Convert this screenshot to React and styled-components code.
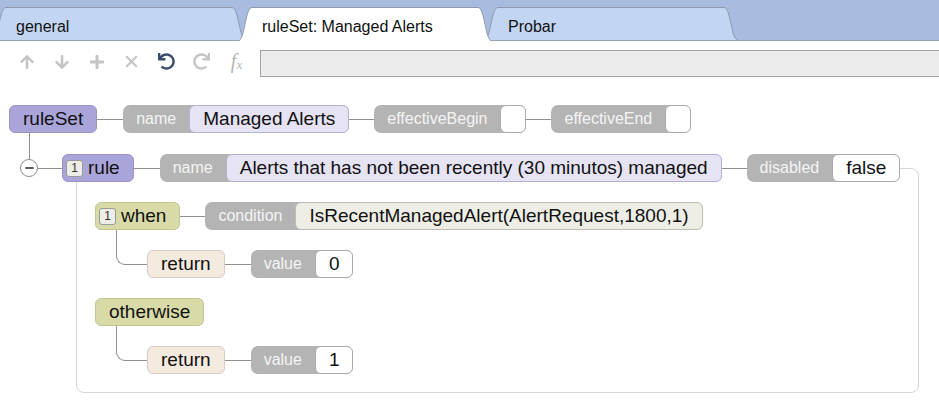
import React from 'react';
import styled, { createGlobalStyle } from 'styled-components';
import { FaArrowUp, FaArrowDown, FaPlus, FaUndo, FaRedo } from 'react-icons/fa';
import { X } from 'lucide-react';

const LINE = '#8f8f8f';

const GlobalStyle = createGlobalStyle`
    html, body {
        margin: 0;
        padding: 0;
        background: #fff;
    }
    body {
        font-family: "Liberation Sans", Arial, sans-serif;
        color: #111;
    }
`;

const Page = styled.div`
    width: 939px;
    height: 404px;
    overflow: hidden;
`;

const TabBar = styled.div`
    display: flex;
    align-items: flex-end;
    height: 41px;
    box-sizing: border-box;
    padding-top: 7px;
    background: #a8bcdf;
    border-bottom: 1px solid #98a2b4;
`;

const TabShape = styled.div`
    display: flex;
    flex: none;
    height: ${(p) => (p.$active ? 34 : 33)}px;
    margin-left: -8px;
    margin-bottom: ${(p) => (p.$active ? -1 : 0)}px;
    position: relative;
    z-index: ${(p) => (p.$active ? 2 : 1)};
    svg {
        display: block;
        flex: none;
    }
`;

const TabBody = styled.div`
    width: 226px;
    box-sizing: border-box;
    background: ${(p) => p.$bg};
    border-top: 1px solid #8e99ad;
    font-size: 16px;
    padding: 10px 0 0 10px;
    white-space: nowrap;
`;

const Toolbar = styled.div`
    display: flex;
    align-items: center;
    height: 44px;
    padding-left: 9px;
`;

const ToolButton = styled.span`
    width: 35px;
    height: 24px;
    margin-top: -3px;
    display: flex;
    justify-content: center;
    align-items: center;
    color: ${(p) => (p.$on ? '#3b4a6b' : '#c4c4c4')};
`;

const FxGlyph = styled.span`
    font-family: "Liberation Serif", "Times New Roman", serif;
    font-style: italic;
    font-size: 20px;
    color: #b5b5b5;
    sub {
        font-size: 13px;
        vertical-align: -1px;
    }
`;

const FormulaInput = styled.div`
    flex: 1;
    height: 27px;
    margin-left: 6px;
    box-sizing: border-box;
    background: #ececec;
    border: 1px solid #a3a3a3;
    border-right: none;
`;

const Tree = styled.div`
    padding: 20px 0 0 9px;
    display: flex;
    flex-direction: column;
    align-items: flex-start;
`;

const Row = styled.div`
    display: flex;
    align-items: center;
    height: 28px;
`;

const Link = styled.span`
    flex: none;
    width: ${(p) => p.$w || 25}px;
    height: 1px;
    background: ${LINE};
`;

const NODE_COLORS = {
    set: { bg: '#aaa5d9', border: '#9a94c8' },
    cond: { bg: '#d8dba8', border: '#c3c692' },
    ret: { bg: '#f5eae0', border: '#d6ccc1' },
};

const Node = styled.div`
    display: flex;
    align-items: center;
    gap: 5px;
    flex: none;
    height: 28px;
    box-sizing: border-box;
    padding: 0 13px 0 ${(p) => (p.$badge ? 3 : 13)}px;
    border: 1px solid ${(p) => NODE_COLORS[p.$kind].border};
    border-radius: 6px;
    background: ${(p) => NODE_COLORS[p.$kind].bg};
    font-size: 19px;
    white-space: nowrap;
`;

const Badge = styled.span`
    width: 17px;
    height: 17px;
    box-sizing: border-box;
    display: flex;
    align-items: center;
    justify-content: center;
    border: 1px solid #999;
    border-radius: 3px;
    background: #eeeee6;
    color: #333;
    font-size: 12px;
`;

const Field = styled.div`
    display: flex;
    align-items: stretch;
    flex: none;
    height: 28px;
    background: #b4b4b4;
    border-radius: 7px;
`;

const FieldLabel = styled.span`
    display: flex;
    align-items: center;
    padding: 0 13px;
    color: #f4f4f4;
    font-size: 16px;
    white-space: nowrap;
`;

const VALUE_COLORS = {
    lav: { bg: '#e5e3f4', border: '#b6b3d1' },
    beige: { bg: '#eeeee7', border: '#bdbdb3' },
    white: { bg: '#ffffff', border: '#ababab' },
};

const FieldValue = styled.span`
    display: flex;
    align-items: center;
    box-sizing: border-box;
    min-width: 26px;
    padding: 0 ${(p) => (p.$empty ? 0 : 13)}px;
    background: ${(p) => VALUE_COLORS[p.$tone].bg};
    border: 1px solid ${(p) => VALUE_COLORS[p.$tone].border};
    border-radius: 6px;
    font-size: 19px;
    white-space: nowrap;
`;

const Stem = styled.span`
    display: block;
    width: 1px;
    height: ${(p) => p.$h}px;
    margin-left: 20px;
    background: ${LINE};
`;

const ChildRow = styled.div`
    display: flex;
    align-items: flex-start;
`;

const ToggleColumn = styled.div`
    width: 53px;
    display: flex;
    flex-direction: column;
`;

const ToggleRow = styled.div`
    display: flex;
    align-items: center;
    padding-left: 11px;
`;

const Collapse = styled.span`
    width: 18px;
    height: 18px;
    box-sizing: border-box;
    border: 1.5px solid #8a8a8a;
    border-radius: 50%;
    background: #fff;
    display: flex;
    align-items: center;
    justify-content: center;
    flex: none;
    &::after {
        content: '';
        width: 9px;
        height: 2.5px;
        background: #5d5d5d;
        border-radius: 1px;
    }
`;

const Frame = styled.div`
    position: relative;
    z-index: 0;
    display: flex;
    flex-direction: column;
    padding-right: 19px;
    &::before {
        content: '';
        position: absolute;
        z-index: -1;
        left: 14px;
        top: 14px;
        right: 0;
        bottom: 0;
        border: 1px solid #d6d6d6;
        border-radius: 8px;
    }
`;

const FrameBody = styled.div`
    display: flex;
    flex-direction: column;
    align-items: flex-start;
    gap: 20px;
    padding: 20px 0 19px 33px;
`;

const Branch = styled.div`
    display: flex;
    flex-direction: column;
    align-items: flex-start;
`;

const Children = styled.div`
    padding: 20px 0 0 52px;
`;

const Child = styled.div`
    position: relative;
    &::before {
        content: '';
        position: absolute;
        left: -31px;
        top: -20px;
        width: 31px;
        height: 35px;
        box-sizing: border-box;
        border-left: 1px solid ${LINE};
        border-bottom: 1px solid ${LINE};
        border-bottom-left-radius: 9px;
    }
`;

const Flare = ({ h, fill, side }) => {
    const curve = side === 'left'
        ? `M0 ${h} C7 ${h} 7 0.5 14 0.5`
        : `M0 0.5 C7 0.5 7 ${h} 14 ${h}`;
    const area = side === 'left' ? `${curve} L14 ${h} Z` : `${curve} L0 ${h} Z`;
    return (
        <svg width="14" height={h} viewBox={`0 0 14 ${h}`}>
            <path d={area} fill={fill} />
            <path d={curve} fill="none" stroke="#8e99ad" strokeWidth="1" />
        </svg>
    );
};

const Tab = ({ label, active }) => {
    const h = active ? 34 : 33;
    const bg = active ? '#ffffff' : '#c2d6f4';
    return (
        <TabShape $active={active}>
            <Flare h={h} fill={bg} side="left" />
            <TabBody $bg={bg}>{label}</TabBody>
            <Flare h={h} fill={bg} side="right" />
        </TabShape>
    );
};

const Prop = ({ label, value, tone = 'white' }) => (
    <Field>
        <FieldLabel>{label}</FieldLabel>
        <FieldValue $tone={tone} $empty={!value}>{value}</FieldValue>
    </Field>
);

const ReturnLeaf = ({ value }) => (
    <Child>
        <Row>
            <Node $kind="ret">return</Node>
            <Link $w={26} />
            <Prop label="value" value={value} />
        </Row>
    </Child>
);

const App = () => (
    <Page>
        <GlobalStyle />
        <TabBar>
            <Tab label="general" />
            <Tab label="ruleSet: Managed Alerts" active />
            <Tab label="Probar" />
        </TabBar>

        <Toolbar>
            <ToolButton><FaArrowUp size={16} /></ToolButton>
            <ToolButton><FaArrowDown size={16} /></ToolButton>
            <ToolButton><FaPlus size={16} /></ToolButton>
            <ToolButton><X size={19} strokeWidth={2.4} /></ToolButton>
            <ToolButton $on><FaUndo size={17} /></ToolButton>
            <ToolButton><FaRedo size={17} /></ToolButton>
            <ToolButton><FxGlyph>f<sub>x</sub></FxGlyph></ToolButton>
            <FormulaInput />
        </Toolbar>

        <Tree>
            <Row>
                <Node $kind="set">ruleSet</Node>
                <Link $w={26} />
                <Prop label="name" value="Managed Alerts" tone="lav" />
                <Link />
                <Prop label="effectiveBegin" />
                <Link />
                <Prop label="effectiveEnd" />
            </Row>
            <Stem $h={21} />
            <ChildRow>
                <ToggleColumn>
                    <Stem $h={5} />
                    <ToggleRow>
                        <Collapse />
                        <Link $w={24} />
                    </ToggleRow>
                </ToggleColumn>
                <Frame>
                    <Row>
                        <Node $kind="set" $badge><Badge>1</Badge>rule</Node>
                        <Link $w={26} />
                        <Prop label="name" value="Alerts that has not been recently (30 minutos) managed" tone="lav" />
                        <Link />
                        <Prop label="disabled" value="false" />
                    </Row>
                    <FrameBody>
                        <Branch>
                            <Row>
                                <Node $kind="cond" $badge><Badge>1</Badge>when</Node>
                                <Link />
                                <Prop label="condition" value="IsRecentManagedAlert(AlertRequest,1800,1)" tone="beige" />
                            </Row>
                            <Children>
                                <ReturnLeaf value="0" />
                            </Children>
                        </Branch>
                        <Branch>
                            <Row>
                                <Node $kind="cond">otherwise</Node>
                            </Row>
                            <Children>
                                <ReturnLeaf value="1" />
                            </Children>
                        </Branch>
                    </FrameBody>
                </Frame>
            </ChildRow>
        </Tree>
    </Page>
);

export default App;
